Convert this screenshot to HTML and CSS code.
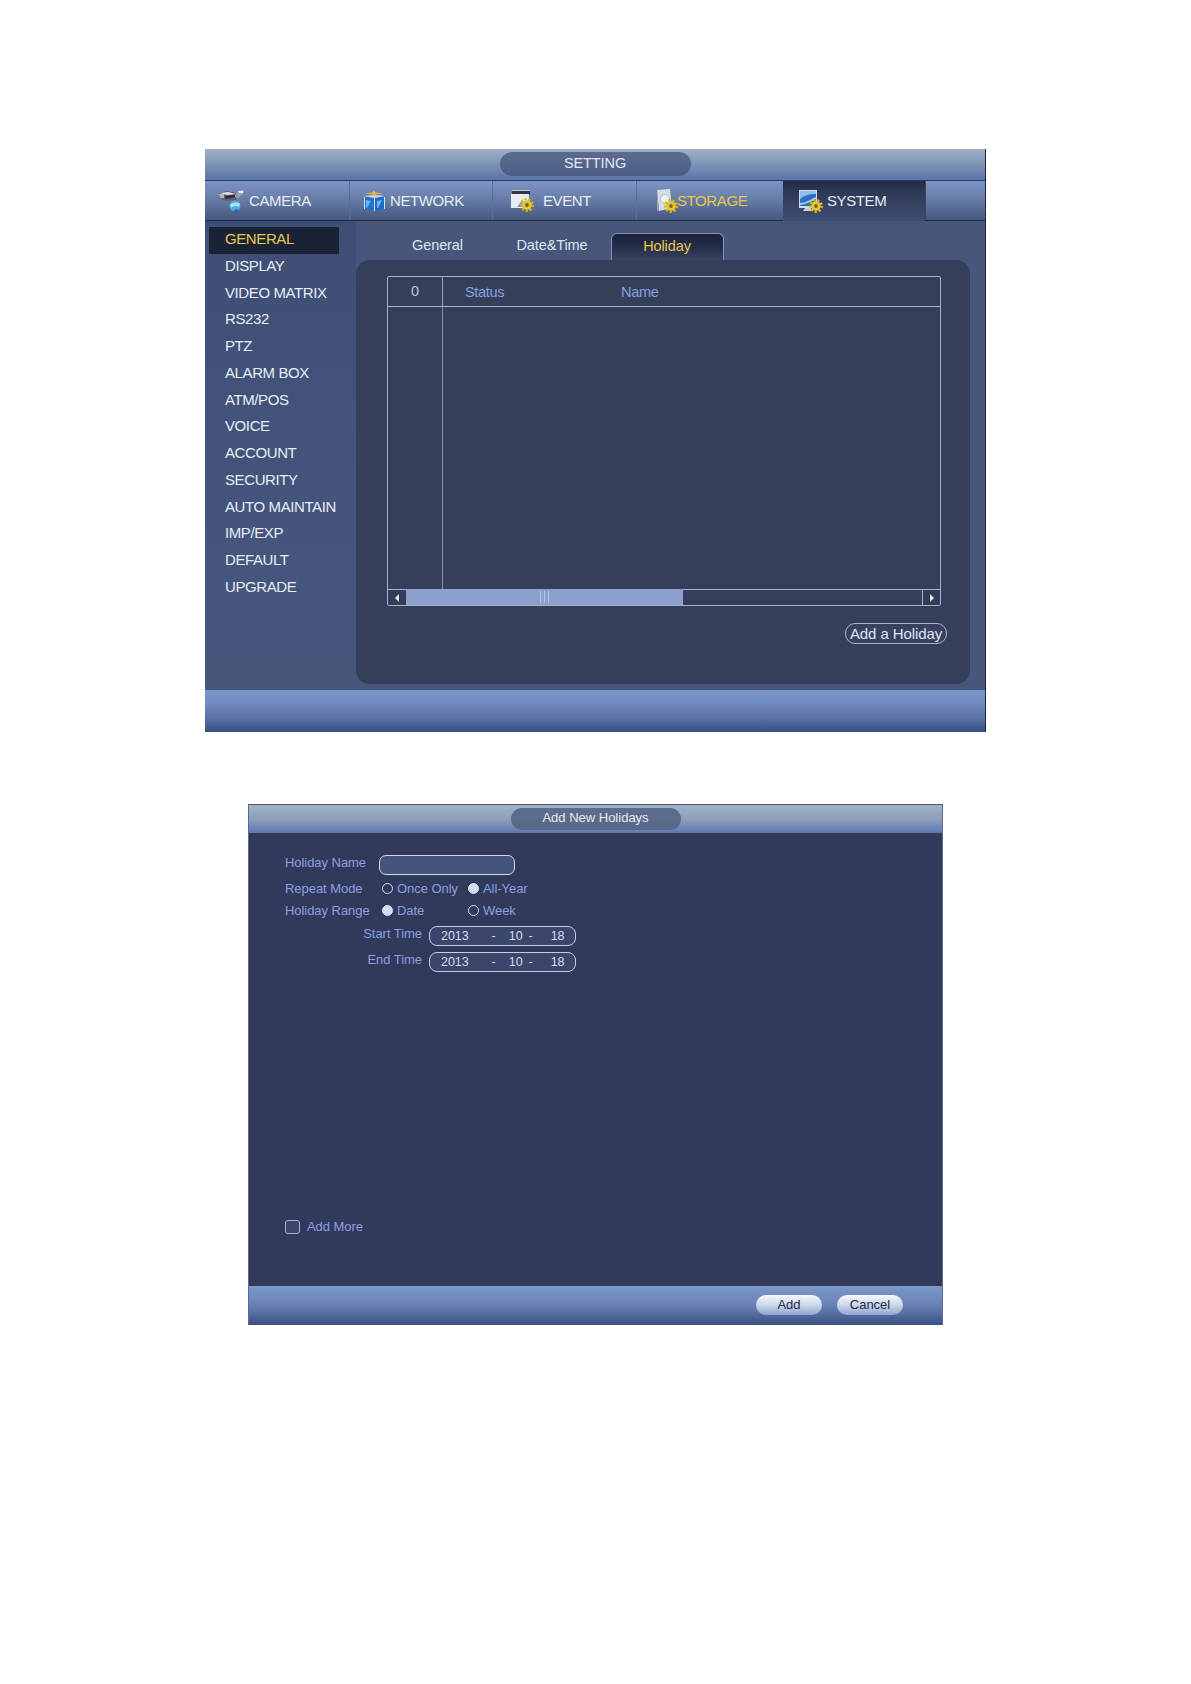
FILE: index.html
```
<!DOCTYPE html>
<html lang="en">
<head>
<meta charset="utf-8">
<title>Holiday settings</title>
<link rel="stylesheet" href="styles.css">
</head>
<body>
<svg class="defs" width="0" height="0">
  <defs>
    <g id="gear">
      <circle cx="0" cy="0" r="5.8" fill="none" stroke="#d9b21c" stroke-width="2.4" stroke-dasharray="2.2 1.8"/>
      <circle cx="0" cy="0" r="4.8" fill="#e8c52a"/>
      <circle cx="0" cy="0" r="1.9" fill="#6c6a3a"/>
    </g>
  </defs>
</svg>
<main class="page">
  <section class="setting">
    <header class="titlebar"><div class="pill">SETTING</div></header>
    <nav class="tabs">
      <div class="tab t1">
        <svg class="ico" width="27" height="24" viewBox="0 0 27 24"><path d="M1 4l8-2 9 2v7l-11 1-6-3z" fill="#5d6069"/><path d="M2 4l8-1 8 2-9 1z" fill="#dfe2e8"/><path d="M1 5h5v4H2z" fill="#b4b8c0"/><path d="M7 7l10-1v2l-9 2z" fill="#2a2c34"/><path d="M17 6l5-5h4v3l-6 5-3-1z" fill="#9aa2b0"/><path d="M20 2h5v2h-4z" fill="#eef0f4"/><circle cx="17" cy="17" r="5.5" fill="#49aee0"/><path d="M12 16c3-3 8-3 10-1l-1 3c-3-2-6-1-8 1z" fill="#a8e2f2"/><path d="M15 23l3-3 3 1-3 3z" fill="#256c9a"/></svg>
        <span>CAMERA</span>
      </div>
      <div class="tab t2">
        <svg class="ico" width="23" height="22" viewBox="0 0 23 22"><path d="M1 7l10 1v13L1 19z" fill="#1f75cd"/><path d="M12 8l10-1v12l-10 2z" fill="#1f6cc4"/><path d="M1 6l10-1 11 1-11 2z" fill="#d3d9e2"/><path d="M1 7v12h1V7zM11 8v13h1V8zM21 7v12h1V7z" fill="#d8dfe9"/><path d="M3 10l5 1-4 7H3z" fill="#63b4ee"/><path d="M14 11l5-1-4 8h-1z" fill="#63b4ee"/><path d="M11 0l1.4 2.6L20 3.4l-7.6 1L11 7 9.6 4.4 2 3.4l7.6-.8z" fill="#e0bd3a"/></svg>
        <span>NETWORK</span>
      </div>
      <div class="tab t3">
        <svg class="ico" width="23" height="23" viewBox="0 0 23 23"><rect x="1" y="1" width="18" height="5" fill="#33363e"/><rect x="0" y="5" width="18" height="14" fill="#e7ebf0"/><path d="M6 18l6-8v8z" fill="#7f9cc4"/><path d="M1 1h18v1H1z" fill="#c7ccd4"/><use href="#gear" x="16" y="16"/></svg>
        <span>EVENT</span>
      </div>
      <div class="tab t4">
        <svg class="ico" width="22" height="24" viewBox="0 0 22 24"><path d="M1 1l13-1 2 19-13 3z" fill="#d5dbe4"/><path d="M1 1l2 21-2-1z" fill="#9aa4b4"/><circle cx="9" cy="10" r="4.5" fill="#eef1f5" stroke="#b7bfcb"/><use href="#gear" x="15" y="17"/></svg>
        <span class="gold">STORAGE</span>
      </div>
      <div class="tab t5 active">
        <svg class="ico" width="24" height="23" viewBox="0 0 24 23"><rect x="0" y="0" width="18" height="18" fill="#d4dae3"/><rect x="1" y="1" width="16" height="15" fill="#2e6fc4"/><path d="M1 9c5-4 10-5 16-5V1H1z" fill="#8cbdec"/><path d="M1 13c5 0 10-3 16-6v2c-5 3-10 5-16 6z" fill="#a9d0f2"/><path d="M6 18h6l2 3H4z" fill="#c8ced8"/><use href="#gear" x="17" y="16"/></svg>
        <span>SYSTEM</span>
      </div>
      <div class="tab-rest"></div>
    </nav>
    <div class="content">
      <ul class="side">
        <li class="sel">GENERAL</li>
        <li>DISPLAY</li>
        <li>VIDEO MATRIX</li>
        <li>RS232</li>
        <li>PTZ</li>
        <li>ALARM BOX</li>
        <li>ATM/POS</li>
        <li>VOICE</li>
        <li>ACCOUNT</li>
        <li>SECURITY</li>
        <li>AUTO MAINTAIN</li>
        <li>IMP/EXP</li>
        <li>DEFAULT</li>
        <li>UPGRADE</li>
      </ul>
      <div class="main">
        <div class="subtabs">
          <div class="subtab">General</div>
          <div class="subtab">Date&amp;Time</div>
          <div class="subtab on">Holiday</div>
        </div>
        <div class="panel">
          <div class="table">
            <div class="thead">
              <div class="c0">0</div>
              <div class="c1">Status</div>
              <div class="c2">Name</div>
            </div>
            <div class="tbody"></div>
            <div class="hscroll">
              <div class="sbtn"><i class="arr left"></i></div>
              <div class="track"><div class="thumb"><i></i><i></i><i></i></div></div>
              <div class="sbtn end"><i class="arr right"></i></div>
            </div>
          </div>
          <div class="actions"><button class="addh" type="button">Add a Holiday</button></div>
        </div>
      </div>
    </div>
    <footer class="foot"></footer>
  </section>

  <section class="dialog">
    <header class="dtitle"><div class="dpill">Add New Holidays</div></header>
    <div class="form">
      <div class="rows">
        <div class="row r-name"><label class="lbl">Holiday Name</label><div class="input"></div></div>
        <div class="row r-repeat">
          <label class="lbl">Repeat Mode</label>
          <span class="opt"><i class="radio"></i>Once Only</span>
          <span class="opt"><i class="radio full"></i>All-Year</span>
        </div>
        <div class="row r-range">
          <label class="lbl">Holiday Range</label>
          <span class="opt"><i class="radio full"></i>Date</span>
          <span class="opt"><i class="radio"></i>Week</span>
        </div>
        <div class="row r-date">
          <label class="lbl2">Start Time</label>
          <div class="date"><b>2013</b><b class="d1">-</b><b class="d2">10</b><b class="d3">-</b><b class="d4">18</b></div>
        </div>
        <div class="row r-date r-end">
          <label class="lbl2">End Time</label>
          <div class="date"><b>2013</b><b class="d1">-</b><b class="d2">10</b><b class="d3">-</b><b class="d4">18</b></div>
        </div>
      </div>
      <div class="more"><i class="check"></i>Add More</div>
    </div>
    <footer class="dfoot">
      <button class="btn" type="button">Add</button>
      <button class="btn" type="button">Cancel</button>
    </footer>
  </section>
</main>
</body>
</html>
```
FILE: styles.css
```
* { box-sizing: border-box; }
html, body { margin: 0; padding: 0; background: #fff; }
body { font-family: "Liberation Sans", Arial, sans-serif; }
.defs { position: absolute; }
.page { width: 1191px; height: 1684px; padding: 149px 0 0 205px; overflow: hidden; }

/* Setting window */
.setting { width: 781px; height: 583px; display: flex; flex-direction: column; background: #47567a; border-right: 1px solid #1b2438; }
.titlebar { height: 32px; display: flex; justify-content: center; align-items: center; background: linear-gradient(#a0aec2, #8296b8 45%, #5a75ab); border-bottom: 1px solid #2e3d60; }
.pill { width: 191px; height: 24px; margin-top: -2px; border-radius: 12px; background: linear-gradient(#5c6b8e, #54668c 50%, #4c5e86); color: #e4e8ef; font-size: 14.5px; line-height: 22px; text-align: center; letter-spacing: -0.1px; }
.tabs { height: 40px; display: flex; color: #e6ecf5; font-size: 15px; line-height: 17px; letter-spacing: -0.4px; background: linear-gradient(#7d95c5, #6a80ac 40%, #48587f); border-bottom: 1px solid #1e2a45; }
.tab { display: flex; align-items: center; height: 39px; }
.tab span { display: block; margin-top: -1px; }
.gold { color: #e6c64f; }
.t1 { width: 145px; padding-left: 13px; border-right: 1px solid #5c6d96; }
.t1 span { margin-left: 4px; }
.t2 { width: 143px; padding-left: 13px; border-right: 1px solid #5c6d96; }
.t2 span { margin-left: 4px; }
.t3 { width: 144px; padding-left: 18px; border-right: 1px solid #5c6d96; }
.t3 span { margin-left: 9px; }
.t4 { width: 146px; padding-left: 19px; }
.t4 span { margin-left: -1px; }
.t5 { width: 142px; padding-left: 16px; }
.t5 span { margin-left: 4px; }
.active { background: linear-gradient(#232b47, #2e3855 25%, #414e72); height: 40px; }
.tab-rest { flex: 1; border-left: 1px solid #3a4768; }
.ico { flex: none; }

.content { flex: 1; display: flex; min-height: 0; }
.side { width: 151px; margin: 0; padding: 6px 0 0 4px; list-style: none; background: linear-gradient(#3f4e75, #45557e 70%, #47567a); }
.side li { width: 130px; height: 26.75px; padding-left: 16px; line-height: 23px; color: #e8edf5; font-size: 15px; letter-spacing: -0.4px; white-space: nowrap; }
.side .sel { background: #1a2236; color: #e9c94e; }
.main { flex: 1; display: flex; flex-direction: column; padding-right: 15px; padding-bottom: 6px; }
.subtabs { height: 39px; display: flex; align-items: flex-end; padding-left: 24px; font-size: 14.5px; letter-spacing: -0.1px; color: #dfe5ef; }
.subtab { width: 115px; height: 27px; line-height: 25px; text-align: center; }
.subtab:nth-child(2) { padding-right: 1px; }
.subtab.on { width: 113px; margin-left: 1px; border: 1px solid #8295c1; border-bottom: 0; border-radius: 6px 6px 0 0; background: linear-gradient(#1a2238, #252e49 50%, #384360); color: #e6c64f; padding-right: 1px; }
.panel { flex: 1; border-radius: 14px; background: #353f59; padding: 16px 23px 0 31px; }
.table { width: 554px; height: 330px; display: flex; flex-direction: column; border: 1px solid #a4b1d2; border-radius: 2px; }
.thead { height: 30px; flex: none; display: flex; align-items: center; color: #8a9fe0; font-size: 14.5px; letter-spacing: -0.3px; border-bottom: 1px solid #a4b1d2; }
.c0 { width: 55px; height: 100%; line-height: 28px; text-align: center; color: #b5c4ea; border-right: 1px solid #8ea0cc; }
.c1 { width: 178px; padding-left: 22px; }
.tbody { flex: 1; margin-left: 54px; border-left: 1px solid #7a8dc2; }
.hscroll { height: 16px; flex: none; display: flex; border-top: 1px solid #a4b1d2; }
.sbtn { width: 18px; display: flex; align-items: center; justify-content: center; background: #333d59; }
.sbtn.end { border-left: 1px solid #a4b1d2; }
.track { flex: 1; display: flex; }
.thumb { width: 277px; margin-top: -1px; background: #8ba0cd; display: flex; justify-content: center; align-items: center; gap: 3px; }
.thumb i { width: 1px; height: 12px; background: #b3c3e4; }
.arr { width: 0; height: 0; border-top: 4px solid transparent; border-bottom: 4px solid transparent; }
.arr.left { border-right: 4px solid #e4e8f2; }
.arr.right { border-left: 4px solid #e4e8f2; }
.actions { display: flex; justify-content: flex-end; padding-top: 17px; }
.addh { width: 102px; height: 21px; padding: 0; border: 1.5px solid #a4b4d8; border-radius: 10px; background: #38425f; color: #dfe5f2; font-family: inherit; font-size: 15px; letter-spacing: -0.1px; line-height: 17px; }
.foot { height: 42px; flex: none; background: linear-gradient(#7c97c9, #6f89bd 35%, #5b74a8 65%, #394f82); }

/* Add New Holidays dialog */
.dialog { width: 695px; height: 521px; margin: 72px 0 0 43px; display: flex; flex-direction: column; background: #323a5c; border-left: 1px solid #5e6a8a; border-right: 1px solid #5e6a8a; }
.dtitle { height: 29px; flex: none; display: flex; justify-content: center; align-items: center; border-top: 1px solid #4a5570; background: linear-gradient(#a2b1c3, #8d9fbe 50%, #5d77af); }
.dpill { width: 170px; height: 22px; border-radius: 11px; background: linear-gradient(#5e6d8e, #566889); color: #e6ebf2; font-size: 13px; line-height: 20px; text-align: center; }
.form { flex: 1; display: flex; flex-direction: column; justify-content: space-between; padding: 21px 0 52px 36px; color: #8a9fe0; font-size: 13px; letter-spacing: -0.05px; min-height: 0; }
.rows { display: flex; flex-direction: column; }
.row { display: flex; align-items: center; height: 22px; white-space: nowrap; }
.r-name { height: 21px; margin-bottom: 3px; }
.r-repeat { margin-bottom: 0; }
.r-range { margin-bottom: 3px; }
.r-date { height: 21px; }
.r-end { margin-top: 5px; }
.lbl { width: 97px; padding-bottom: 2px; }
.r-name .lbl { padding-bottom: 4px; }
.lbl2 { width: 144px; padding: 0 7px 4px 0; text-align: right; }
.input { width: 136px; height: 20px; margin-left: -3px; border: 1px solid #d0d9ef; border-radius: 7px; background: #45527c; }
.opt { width: 86px; display: flex; align-items: center; padding-bottom: 2px; }
.radio { flex: none; width: 11px; height: 11px; margin-right: 4px; border: 1px solid #d7dff2; border-radius: 50%; }
.radio.full { background: #d4dcf0; }
.date { width: 147px; height: 20px; display: flex; padding-left: 11px; border: 1px solid #c2cdea; border-radius: 8px; background: #3c466b; color: #d5dcef; font-size: 12.5px; line-height: 18px; }
.date b { font-weight: 400; }
.d1 { margin-left: 23px; }
.d2 { margin-left: 13px; }
.d3 { margin-left: 6px; }
.d4 { margin-left: 18px; }
.more { display: flex; align-items: center; height: 14px; line-height: 12px; }
.check { flex: none; width: 15px; height: 14px; margin-right: 7px; border: 1.5px solid #a6b6e0; border-radius: 3px; background: #3c466b; }
.dfoot { height: 39px; flex: none; display: flex; justify-content: flex-end; gap: 15px; padding: 9px 39px 0 0; background: linear-gradient(#7c97c9, #6f89bd 35%, #5b74a8 65%, #394f82); }
.btn { width: 66px; height: 20px; padding: 0 0 2px; border: 0; border-radius: 10px; background: linear-gradient(#f6f8fc, #ccd7ea 50%, #8fa5cf); color: #1f2843; font-family: inherit; font-size: 13px; }
```
